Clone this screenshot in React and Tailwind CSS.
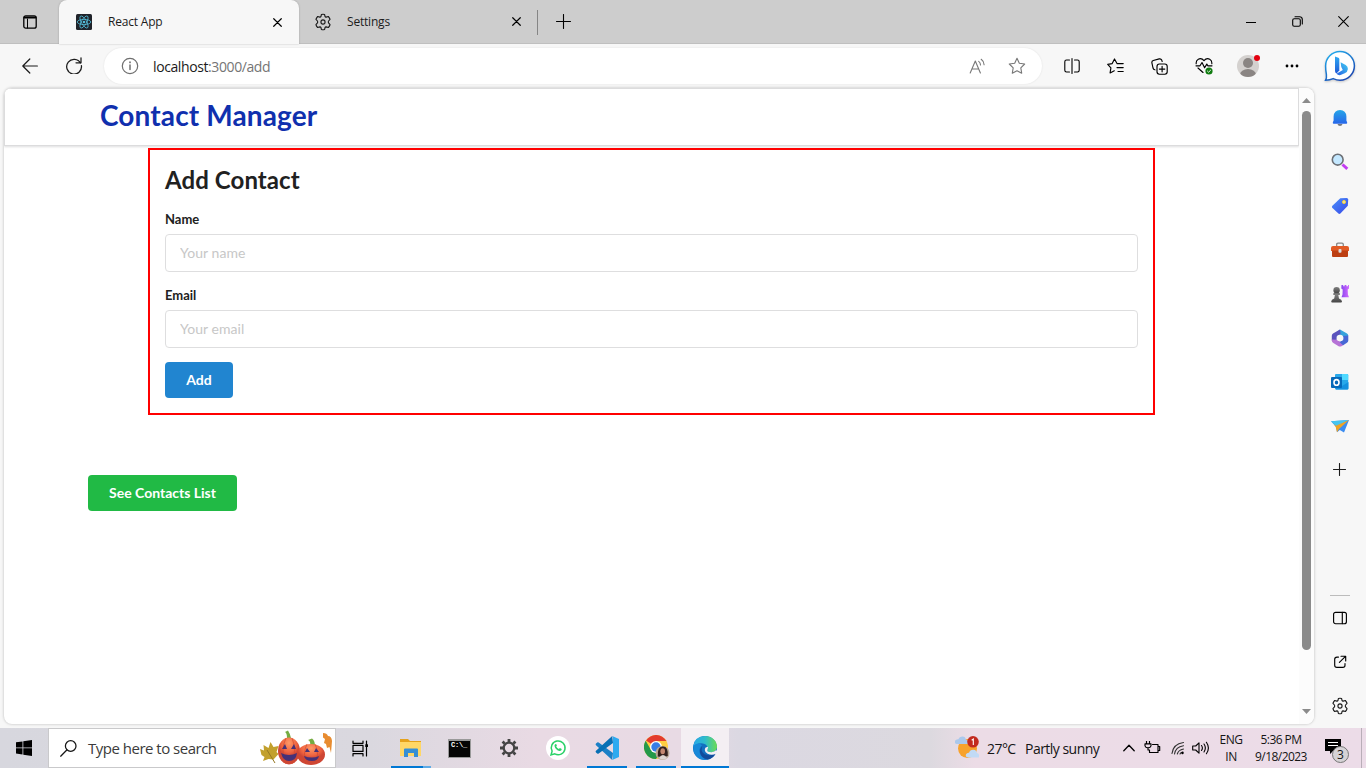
import React from "react";

function Svg({ w = 20, h, vb, sw = 1.2, color = "#1b1b1b", children, className = "" }) {
  const hh = h || w;
  return (
    <svg width={w} height={hh} viewBox={vb || `0 0 ${w} ${hh}`} fill="none" stroke={color} strokeWidth={sw}
      strokeLinecap="round" strokeLinejoin="round" className={"block shrink-0 " + className}>
      {children}
    </svg>
  );
}

const Close = ({ s = 9 }) => (
  <Svg w={s} vb="0 0 10 10" sw={1.3} color="#000"><path d="M.8 .8l8.4 8.4M9.2 .8L.8 9.2" /></Svg>
);

const Gear = ({ w = 18 }) => (
  <Svg w={w} vb="0 0 20 20" sw={1.25}>
    <path d="M8.2 1.7 Q10 1.2 11.8 1.7 L12.3 3.9 Q12.6 4.7 13.5 4.6 L15.9 3.9 Q17.2 5.2 17.8 7 L16.2 8.9 Q15.5 9.9 16.2 11 L17.8 13 Q17.2 14.8 15.9 16.1 L13.5 15.4 Q12.6 15.3 12.3 16.1 L11.8 18.3 Q10 18.8 8.2 18.3 L7.7 16.1 Q7.4 15.3 6.5 15.4 L4.1 16.1 Q2.8 14.8 2.2 13 L3.8 11 Q4.5 9.9 3.8 8.9 L2.2 7 Q2.8 5.2 4.1 3.9 L6.5 4.6 Q7.4 4.7 7.7 3.9 Z" />
    <circle cx="10" cy="10" r="2.3" />
  </Svg>
);

const ReactLogo = () => (
  <svg width="16" height="16" viewBox="0 0 16 16" className="block shrink-0">
    <rect width="16" height="16" rx="1.5" fill="#20232a" />
    <g fill="none" stroke="#53bcd8" strokeWidth=".8">
      <ellipse cx="8" cy="8" rx="6.8" ry="2.6" />
      <ellipse cx="8" cy="8" rx="6.8" ry="2.6" transform="rotate(60 8 8)" />
      <ellipse cx="8" cy="8" rx="6.8" ry="2.6" transform="rotate(120 8 8)" />
    </g>
    <circle cx="8" cy="8" r="1.3" fill="#53bcd8" />
  </svg>
);

const Star = ({ color }) => (
  <Svg w={18} color={color} sw={1.1}>
    <path d="M9 1.3l2.3 4.9 5.4.8-3.9 3.8.9 5.4L9 13.7l-4.7 2.5.9-5.4L1.3 7l5.4-.8z" />
  </Svg>
);

function TabStrip() {
  return (
    <div className="flex h-11 shrink-0 items-stretch border-b border-[#bfbfbf] bg-[#cdcdcd]">
      <div className="flex w-[59px] items-center justify-center">
        <Svg w={14} sw={1.3} color="#000">
          <rect x=".8" y=".8" width="12.4" height="12.4" rx="2" />
          <path d="M1.5 2.5h11" strokeWidth="2" /><path d="M4.5 4v9" strokeWidth="1" />
        </Svg>
      </div>
      <div className="-mb-px flex w-60 items-center rounded-t-lg bg-[#f7f7f7] pr-[17px] pl-[17px] shadow-[0_0_2px_rgba(0,0,0,.25)]">
        <ReactLogo />
        <span className="ml-4 flex-1 text-[12px] tracking-[-0.2px] text-[#1b1b1b]">React App</span>
        <Close />
      </div>
      <div className="flex w-[238px] items-center pr-4 pl-[15px]">
        <Gear />
        <span className="ml-[15px] flex-1 text-[12px] tracking-[-0.2px] text-[#1b1b1b]">Settings</span>
        <Close />
      </div>
      <div className="mt-[10px] h-[25px] w-px bg-[#858585]" />
      <div className="flex w-[51px] items-center justify-center">
        <Svg w={15} sw={1.1} color="#000"><path d="M7.5 .5v14M.5 7.5h14" /></Svg>
      </div>
      <div className="ml-auto flex">
        <div className="flex w-[46px] items-center justify-center"><Svg w={10} sw={1} color="#000"><path d="M0 5.5h10" /></Svg></div>
        <div className="flex w-[46px] items-center justify-center">
          <Svg w={11} sw={1.1} color="#000"><rect x=".7" y="2.7" width="7.6" height="7.6" rx="1.5" /><path d="M3 .7h4.6a2.7 2.7 0 0 1 2.7 2.7V8" /></Svg>
        </div>
        <div className="flex w-[46px] items-center justify-center"><Svg w={11} sw={1.1} color="#000"><path d="M.7.7l9.6 9.6M10.3.7L.7 10.3" /></Svg></div>
      </div>
    </div>
  );
}

const Slot = ({ children }) => <div className="flex w-11 shrink-0 items-center justify-center">{children}</div>;

function Bing() {
  return (
    <svg width="32" height="32" viewBox="0 0 32 32" className="block drop-shadow-[0_1px_1px_rgba(0,0,0,.2)]">
      <defs>
        <linearGradient id="ring" x1="0" y1="0" x2=".6" y2="1"><stop stopColor="#23b5f2" /><stop offset="1" stopColor="#1b4ab4" /></linearGradient>
        <linearGradient id="stem" x1="0" y1="0" x2="0" y2="1"><stop stopColor="#2fa9f2" /><stop offset="1" stopColor="#1f58d6" /></linearGradient>
        <linearGradient id="bee" x1="1" y1="0" x2="0" y2="1"><stop stopColor="#45d0f2" /><stop offset="1" stopColor="#2460e4" /></linearGradient>
      </defs>
      <path d="M1.6 30.2q1.2-2.4.8-5.6Q1.600 20.500 1.600 16A14.4 14.4 0 1 1 16 30.3c-3 0-5.1-.9-6.8-1.7-2 .9-4.2 1.5-7.6 1.6z" fill="#fff" stroke="url(#ring)" strokeWidth="1.5" />
      <path d="M11 6.6l3.4 1.2q.9.4.9 1.4v11.2l-2.8 3.2q-1.5-.8-1.5-2.5z" fill="url(#stem)" />
      <path d="M16.6 12.2l5.1 2.8q2.3 1.4 2.2 4-.2 3-3.2 4.3l-4.2 1.8q-2.3.5-4-1.3l6.3-3.7-1.5-3.2z" fill="url(#bee)" />
    </svg>
  );
}

function Toolbar() {
  return (
    <div className="flex h-11 shrink-0 items-center pl-2">
      <Slot><Svg w={16} sw={1.2}><path d="M.8 8h14.6M7.8 1L.8 8l7 7" /></Svg></Slot>
      <Slot><Svg w={18} sw={1.25} className="-translate-y-px"><path d="M15.6 7.2A7.4 7.4 0 1 0 16.4 9.6M16 1.8v5h-5" /></Svg></Slot>
      <div className="ml-2 flex h-9 w-[938px] items-center rounded-full bg-white pr-4 pl-[17px] shadow-[0_0_2px_rgba(0,0,0,.1)]">
        <Svg w={18} color="#6f6f6f" sw={1.2}><circle cx="9" cy="9" r="7.7" /><path d="M9 8v4.6" strokeWidth="1.5" /><path d="M9 5.2v.3" strokeWidth="1.7" /></Svg>
        <span className="ml-[14px] flex-1 text-[14px] tracking-[-0.4px] text-[#1b1b1b]">localhost<span className="text-[#757575]">:3000/add</span></span>
        <Svg w={17} color="#777" sw={1.1} className="mr-[22px]"><path d="M1.2 15L6.3 3l5.1 12M3 11h6.6M9.7 3.4q1.7 1.2 1.8 3.6M12.2 1.3q2.8 2 2.9 5.5" /></Svg>
        <Star color="#777" />
      </div>
      <div className="ml-2 flex">
        <Slot><Svg w={16} color="#000" sw={1.1} className="-ml-px"><path d="M5.5 2H2.5Q.8 2 .8 3.7v8.600Q.8 14 2.5 14h3M10.500 2h3q1.700 0 1.700 1.700v8.600q0 1.700-1.700 1.700h-3M8 .6v14.800" /></Svg></Slot>
        <Slot><Svg w={17} color="#000" sw={1.15} className="-ml-px"><path d="M10 5.6L7.5.9 5.2 5.6.7 6.4l3.2 3.5-.8 5 4.2-2.1M10 5.6h6.2M10 9.6h6.2M11 13.5h5.2" /></Svg></Slot>
        <Slot><Svg w={17} color="#000" sw={1.15} className="-ml-px"><rect x="6" y="6" width="10.2" height="10.2" rx="2.4" /><path d="M11.1 8.4v5.4M8.4 11.1h5.4M3.9 11.8q-1.5-.2-1.9-1.8L.9 4.8Q.6 3 2.3 2.5l5.9-1.6q1.8-.4 2.5 1.2l.5 1.4" /></Svg></Slot>
        <Slot><Svg w={18} color="#000" sw={1.15}>
          <path d="M1.2 6.8Q.8 3.5 3.3 2.2 6.5.7 9 3.7q2.5-3 5.7-1.5 2.5 1.3 2.1 4.6M1 8.8h4l2-3.3 2.6 5.3 2.2-3.7 1 1.7H17M3 11l5 4.5" />
          <circle cx="14" cy="14" r="3.6" fill="#107c10" stroke="none" /><path d="M12.4 14l1.2 1.2 2-2" stroke="#fff" strokeWidth=".9" />
        </Svg></Slot>
        <Slot>
          <svg width="26" height="24" viewBox="0 0 26 24" className="ml-1 block shrink-0">
            <defs><clipPath id="av"><circle cx="11" cy="12" r="11" /></clipPath></defs>
            <g clipPath="url(#av)"><rect width="22" height="24" fill="#d4d1cf" /><circle cx="11" cy="9" r="5" fill="#8a8583" /><ellipse cx="11" cy="20.7" rx="8" ry="5.7" fill="#8a8583" /></g>
            <circle cx="20" cy="4" r="3" fill="#e3000f" />
          </svg>
        </Slot>
        <Slot><Svg w={14} h={4}><g fill="#000" stroke="none"><circle cx="2" cy="2" r="1.4" /><circle cx="7" cy="2" r="1.4" /><circle cx="12" cy="2" r="1.4" /></g></Svg></Slot>
      </div>
      <div className="ml-[10px]"><Bing /></div>
    </div>
  );
}

function Field({ label, hint }) {
  return (
    <label className="mb-[14px] block">
      <span className="mb-1.5 block text-[13px] leading-[18px] font-bold text-[#212121]">{label}</span>
      <input placeholder={hint} className="block h-[38px] w-full rounded border border-[#dededf] bg-white px-[14px] pb-0.5 text-[14px] tracking-[0.05px] text-[#212121] placeholder:text-[#c7c7c7]" />
    </label>
  );
}

function Page() {
  return (
    <main className="flex min-w-0 flex-1 overflow-hidden rounded-lg bg-white shadow-[0_0_3px_rgba(0,0,0,.25)]">
      <div className="flex-1 font-['Lato',sans-serif]">
        <header className="h-[58px] border border-[#dcdcdd] pt-[6px] pl-[95px] shadow-[0_1px_2px_rgba(34,36,38,.15)]">
          <h1 className="text-[28px] leading-[40px] font-bold tracking-[0.12px] text-[#1030ae]">Contact Manager</h1>
        </header>
        <section className="mt-0.5 ml-36 h-[267px] w-[1007px] border-2 border-[#ff0000] px-[15px] pt-[14px]">
          <h2 className="mb-[14px] text-[24px] leading-[32px] font-bold tracking-[0.08px] text-[#212121]">Add Contact</h2>
          <Field label="Name" hint="Your name" />
          <Field label="Email" hint="Your email" />
          <button className="block h-9 w-[68px] rounded bg-[#2185d0] pb-0.5 text-[14px] font-bold text-white">Add</button>
        </section>
        <button className="mt-[60px] ml-[84px] block h-9 w-[149px] rounded bg-[#21ba45] pb-0.5 text-[14px] font-bold text-white">See Contacts List</button>
      </div>
      <div className="flex w-[15px] flex-col items-center bg-[#fcfcfc] pt-[10px] pb-[10px]">
        <Svg w={9} h={5}><path d="M0 5L4.5 0 9 5z" fill="#8b8b8b" stroke="none" /></Svg>
        <div className="mt-2 h-[539px] w-[9px] rounded-full bg-[#8b8b8b]" />
        <Svg w={9} h={5} className="mt-auto"><path d="M0 0L4.5 5 9 0z" fill="#8b8b8b" stroke="none" /></Svg>
      </div>
    </main>
  );
}

const sideIcons = [
  <g key="bell"><path d="M6.5 15h5q-.4 2-2.5 2t-2.5-2z" fill="#747980" /><path d="M2.6 11.5V7.5Q3 1 9 1t6.4 6.5v4l.8 2q.2 1.2-1 1.2H2.8q-1.2 0-1-1.2z" fill="url(#blueg)" /></g>,
  <g key="search"><path d="M11.5 11.5l4.8 4.3" stroke="#c23cf2" strokeWidth="3" /><circle cx="6.7" cy="6.7" r="5.4" fill="#c4e8ff" stroke="#6c7076" strokeWidth="1.6" /></g>,
  <g key="tag"><path d="M9.3 1.2l6.3-.2q1.6 0 1.6 1.5l-.4 6.3-7.4 7.7q-1 .8-2 0L1.2 10.8q-.7-1 .2-2z" fill="url(#tagg)" /><circle cx="13" cy="5" r="1.6" fill="#e8e4a0" stroke="#f4ca3a" strokeWidth="1" /></g>,
  <g key="box"><path d="M5.7 5V3.4q0-1.3 1.3-1.3h4q1.3 0 1.3 1.3V5" fill="none" stroke="#858585" strokeWidth="1.3" /><path d="M2 5h14q2 0 2 2v3H0V7q0-2 2-2z" fill="#e25b25" /><path d="M1 9.5h16v5.5q0 1-1 1H2q-1 0-1-1z" fill="#bd3f12" /><rect x="7.5" y="8" width="3" height="3.8" rx="1" fill="#ddd" /></g>,
  <g key="chess"><path d="M10.5 0h1.7v1.3h1.4V0h1.8v1.3H17V0h1v3.5l-1.3 1 .2 5.1 1.1 2.6h-7.5l1-2.6.2-5.1-1.4-1z" fill="url(#rookg)" /><g fill="url(#pawng)"><circle cx="5.600" cy="5.200" r="3.200" /><rect x="2.200" y="8" width="6.800" height="1.800" rx=".9" /><path d="M4 9.500h3.200l.8 4q2.900.8 3 3 0 1-1 1H1.200q-1 0-1-1 .1-2.200 3-3z" /></g></g>,
  <g key="m365"><path d="M9 .4l7 4q1.300.8 1.300 2.300L12 8.500 9 6.300 5.800 8.500 5.600 3z" fill="#35a3dc" /><path d="M9 .4L2 4.400Q.8 5.200.8 6.700v4.800l5-.7V7.300L9.600 5z" fill="#5a52bd" /><path d="M.8 10.500v1Q.8 13 2 13.700l5.600 3.500q1.400.7 2.800 0l3-1.800L9 12.600 5.800 10.800z" fill="#b673d6" /><path d="M17.300 6.500V11.500q0 1.500-1.300 2.300l-4 2.400L8.500 12.900l3.700-2.100V7z" fill="#4768d5" /><circle cx="9" cy="9" r="3.300" fill="#f7f7f7" /></g>,
  <g key="outlook"><rect x="4" y="1" width="13.2" height="15.5" rx="1" fill="#28a8ea" /><path d="M11 1h5q1.2 0 1.2 1.2V7H11z" fill="#50d9ff" /><path d="M4 10l7 3 6.5-4v6.5q0 1-1 1H5z" fill="#1490df" /><rect x="0" y="4" width="11" height="11" rx="1" fill="#0669b9" /><ellipse cx="5.5" cy="9.4" rx="2.5" ry="2.8" fill="none" stroke="#fff" strokeWidth="1.6" /></g>,
  <g key="send"><path d="M0 4.3L18 3 13 15.5l-4.2-2.4L6 15.3l-1-5.5z" fill="#3b8cf0" /><path d="M0 4.3l5.2 5L18 3z" fill="#47c5ef" /><path d="M2.8 7.2L5 8.800 18 3 8 12l-2 3.300-1.200-5z" fill="#efa324" /></g>,
];

function Sidebar() {
  return (
    <aside className="flex w-[52px] shrink-0 flex-col items-center pt-2">
      {sideIcons.map((icon, i) => (
        <div key={i} className="flex h-11 items-center justify-center">
          <svg width="18" height="18" viewBox="0 0 18 18" className="block">
            <defs>
              <linearGradient id="blueg" x2="0" y2="1"><stop stopColor="#26a6e8" /><stop offset="1" stopColor="#2766e9" /></linearGradient>
              <linearGradient id="tagg" x2="1" y2="1"><stop stopColor="#4b91fb" /><stop offset="1" stopColor="#3848e7" /></linearGradient>
              <linearGradient id="rookg" x2="1"><stop stopColor="#8646ed" /><stop offset="1" stopColor="#d46bff" /></linearGradient>
              <linearGradient id="pawng" x2="0" y2="1"><stop stopColor="#808080" /><stop offset="1" stopColor="#444" /></linearGradient>
            </defs>
            {icon}
          </svg>
        </div>
      ))}
      <div className="flex h-11 items-center"><Svg w={13} h={13} sw={1.1} className="mr-px mb-px"><path d="M6.5 .5v12M.5 6.5h12" /></Svg></div>
      <div className="mt-auto h-px w-5 bg-[#bcbcbc]" />
      <div className="flex h-11 items-center"><Svg w={14} color="#000" sw={1.15}><rect x=".6" y="1.3" width="12.8" height="11.4" rx="2" /><path d="M9.3 1.4v11.2" /></Svg></div>
      <div className="flex h-11 items-center"><Svg w={14} color="#000" sw={1.15}><path d="M5.5 2.1H4Q1.7 2.1 1.7 4.3v5.9q0 2.2 2.2 2.2h5.9q2.2 0 2.2-2.2V8.5M8 1.2h4.7V6M12.5 1.4L6.4 7.4" /></Svg></div>
      <div className="flex h-11 items-center"><Gear /></div>
    </aside>
  );
}

const Pumpkins = () => (
  <svg width="76" height="36" viewBox="0 0 76 36" className="block shrink-0">
    <defs><radialGradient id="pump" cx=".5" cy=".2"><stop stopColor="#ff9a68" /><stop offset=".7" stopColor="#ee6340" /><stop offset="1" stopColor="#ce4634" /></radialGradient></defs>
    <path d="M1 19l4 1.5L4.5 15l5 3 2-6 3 5 5-1-2 6 2 2-5 5.5-5-.5-5.5 2 1.5-4-3-2z" fill="#c2a02d" /><path d="M8 20l8 13" stroke="#967824" />
    <path d="M28 8q0-5-2-6l3-1.5q2 3 3 7.5z" fill="#75ac42" />
    <ellipse cx="30" cy="21" rx="11" ry="13.5" fill="url(#pump)" />
    <path d="M27 8q-6 12 0 26M33 8q5 12 0 26" fill="none" stroke="#d4492d" strokeWidth=".7" />
    <path d="M23 19l3-5 2 5zM32 19l3-5 2 5zM22 23q8 4 16 0-1 8-8 8-6 0-8-8z" fill="#453177" />
    <path d="M51 16q1-5-2-6l4-1.5q3 2 3 7.5z" fill="#75ac42" />
    <ellipse cx="52" cy="24.5" rx="14" ry="10.5" fill="url(#pump)" />
    <path d="M48 14q-5 10 0 20M56 14q5 10 0 20" fill="none" stroke="#d4492d" strokeWidth=".7" />
    <path d="M46 22l2-4 3 4zM55 22l2-4 3 4zM45 26q8 3 15 0-1 5-7 5-7 0-8-5z" fill="#453177" />
    <path d="M64 3q4 0 5 3 3.5 0 4 5l-1 12-1.5-6-2.5 1-1-4-2-1 1-4-2-1.5z" fill="#e88c30" />
  </svg>
);

const TaskApp = ({ children, line, active }) => (
  <div className={"flex h-10 shrink-0 flex-col items-center " + (active ? "ml-px w-12 bg-[#f4eff3]" : "w-[49px]")}>
    <div className="flex flex-1 items-center pt-0.5">{children}</div>
    <div className={"h-0.5 " + (active ? "w-full bg-[#0078d4]" : line === "split" ? "w-10 border-r-8 border-[#5fabe6] bg-[#0078d4]" : line ? "w-10 bg-[#0078d4]" : "w-10")} />
  </div>
);

function Taskbar() {
  return (
    <footer className="flex h-10 shrink-0 items-center bg-[linear-gradient(90deg,#d7d7de_0px,#dad8df_370px,#e9dae4_540px,#e8dae4_680px,#dbd8e2_740px,#dcd9df_930px,#ecdce6_975px,#ecdce8_1366px)] text-[#151515]">
      <div className="flex w-12 justify-center"><svg width="16" height="16" viewBox="0 0 16 16" className="block"><path d="M0 2.3l6.5-.9v6.1H0zM7.3 1.3L16 0v7.5H7.3zM0 8.3h6.5v6.2L0 13.6zM7.3 8.3H16V16l-8.7-1.2z" fill="#000" /></svg></div>
      <div className="flex h-10 w-[288px] items-center border border-[#c9c9cb] bg-white pl-[11px]">
        <Svg w={17} color="#151515" sw={1.25}><circle cx="10.7" cy="6" r="5.3" /><path d="M6.8 10L.7 16.2" /></Svg>
        <span className="ml-[11px] flex-1 text-[15px] tracking-[-0.5px] text-[#3b3b3b]">Type here to search</span>
        <Pumpkins />
      </div>
      <TaskApp><Svg w={17} color="#000" sw={1.2}><path d="M1 1v2.3h10V1M1 16v-2.3h10V16M1 5.4h10v6H1zM14.5 1v15" /><rect x="13.3" y="4.3" width="2.7" height="2.7" fill="#000" stroke="none" /></Svg></TaskApp>
      <div className="ml-px flex">
        <TaskApp line="split"><svg width="22" height="20" viewBox="0 0 22 20" className="block"><path d="M0 1h8l2 2h11v15H0z" fill="#e5a21b" /><path d="M0 4h21v14H0z" fill="#ffd766" /><path d="M4 11.5q0-1 1-1h12q1 0 1 1V19h-4v-4H8v4H4z" fill="#368fd5" /></svg></TaskApp>
        <TaskApp>
          <div className="h-[19px] w-[23px] border border-t-2 border-[#999] bg-[#050505] pl-0.5 font-['Liberation_Mono',monospace] text-[7px] leading-[9px] font-bold tracking-[-0.2px] text-white">C:\_</div>
        </TaskApp>
        <TaskApp><svg width="18" height="18" viewBox="0 0 18 18" className="block"><circle cx="9" cy="9" r="5.3" fill="none" stroke="#444" strokeWidth="2.3" /><g stroke="#444" strokeWidth="2.8"><path d="M9 0v3M9 15v3M0 9h3M15 9h3M2.6 2.6l2.1 2.1M13.3 13.3l2.1 2.1M2.6 15.4l2.1-2.1M13.3 4.7l2.1-2.1" /></g></svg></TaskApp>
        <TaskApp><svg width="24" height="24" viewBox="0 0 24 24" className="block"><circle cx="12" cy="12" r="12" fill="#fff" /><path d="M5 19l1.1-3.8a6.9 6.9 0 1 1 2.7 2.7z" fill="none" stroke="#2bd169" strokeWidth="1.5" /><path d="M9.2 8.2q.8-.7 1.3.4l.4 1-.7 1q.9 1.7 2.7 2.5l1-1 1.9 1q-.2 2-2.1 1.9-4.2-.8-5.2-5-.1-1.1.7-1.8z" fill="#2bd169" /></svg></TaskApp>
        <TaskApp line><svg width="24" height="24" viewBox="0 0 24 24" className="block"><path d="M17.2 24L1 9.2q-.9-.8 0-1.6l1.2-1.1q.7-.6 1.5 0L18 17z" fill="#1b80c7" /><path d="M17.2 0L1 14.8q-.9.8 0 1.6l1.2 1.1q.7.6 1.5 0L18 7z" fill="#0870b5" /><path d="M17.2 0L24 3v18l-6.8 3 .8-1.5v-21z" fill="#2daaf0" /></svg></TaskApp>
        <TaskApp line>
          <svg width="26" height="26" viewBox="0 0 26 26" className="ml-0.5 block"><circle cx="12" cy="12" r="12" fill="#ffcd42" /><path d="M12 12L2 5.5A12 12 0 0 1 22.5 6H12z" fill="#e33b2e" /><path d="M1.7 5.8A12 12 0 0 0 12 24l5-8-5-4-5 3z" fill="#24994a" /><circle cx="12" cy="12" r="6" fill="#fff" /><circle cx="12" cy="12" r="4.7" fill="#387ee5" /><circle cx="18.5" cy="18" r="7" fill="#b9a796" /><path d="M13.8 21.5q-.5-10.5 5-10 5.500-.5 5 9.500l-4 1z" fill="#34211d" /><ellipse cx="18.7" cy="16.2" rx="2.3" ry="3" fill="#c48770" /><path d="M15 23q4-6 8 0-4 3-8 0z" fill="#ded5d0" /></svg>
        </TaskApp>
        <TaskApp active>
          <svg width="24" height="24" viewBox="0 0 24 24" className="block"><defs><linearGradient id="edge" x2="1"><stop stopColor="#28a7e8" /><stop offset=".5" stopColor="#2fbccb" /><stop offset="1" stopColor="#6bdc52" /></linearGradient></defs><circle cx="12" cy="12" r="12" fill="#126fc0" /><path d="M0 11Q1.7 0 12 0c7 0 12 5 12 10.4 0 3.8-3 5.8-6.4 5.8-2.3 0-3.8-.8-3.2-2Q15.2 12 14 10q-1.7-2.8-6-2.8-5 0-8 3.8z" fill="url(#edge)" /><path d="M9 9.2q-4.2 3-2 8.4 2 4.6 7 6.1Q4 25 .7 15.8-.2 12 .8 9.7 5 5.8 9 9.2z" fill="#1889d8" /><path d="M9.2 10q-2.5 8 5.8 9.3 4 .4 7.6-1.8-2.6 5-8 6.1Q7.7 22 7 16.3q-.2-4 2.2-6.3z" fill="#134b9b" /><path d="M14.4 14q-.7 2.2 4 2.2 3.3-.3 4.5-2l1.5.6-1.3 3q-4.5 2-8.5 0-4.3-2.4-2-6.3l2.6-.8z" fill="#f4eff3" /></svg>
        </TaskApp>
      </div>
      <div className="ml-auto flex items-center">
        <svg width="25" height="24" viewBox="0 0 25 24" className="-ml-px block"><circle cx="12.5" cy="12.5" r="9.5" fill="#f7a22c" /><path d="M2 8q-3-.5-2-3.2Q1 3 3.3 3.2 4.5.3 7.4.5q3.2.2 3.4 3Q14 4 13 8z" fill="#aac8ec" /><path d="M13 21.5q-3-.5-2-3.2 1-1.8 3-1.6 1-3.2 4.4-3t3.4 3.3q3.2.5 2 4.5z" fill="#c1daf5" /><circle cx="18" cy="5.8" r="5.8" fill="#c22b20" /><path d="M16.7 4.2l1.6-1.2v6" fill="none" stroke="#fff" strokeWidth="1.1" /></svg>
        <span className="ml-[7px] w-[38px] text-[14px] tracking-[-0.55px] whitespace-nowrap">27°C</span>
        <span className="w-[75px] text-[14px] tracking-[-0.52px] whitespace-nowrap">Partly sunny</span>
        <Svg w={12} h={8} color="#000" sw={1.3} className="ml-[23px]"><path d="M.8 6.8L6 1.3l5.2 5.5" /></Svg>
        <Svg w={17} h={14} color="#000" sw={1.15} className="ml-[9px]"><path d="M8.500 3.5H14v8H5.500V9M14.500 5.5h1.200v4h-1.200M2.500 0v2.500M5.500 0v2.500M1 2.800h6v2q-.5 2-3 2t-3-2zM4 7v2h1.500" /></Svg>
        <Svg w={14} h={14} color="#333" sw={1.1} className="ml-[10px]"><path d="M1 12.5Q2 3 12.5 1.5M3.5 13Q4.5 6 12.5 4.7M6.3 13q1-4 6.2-5" /><path d="M9 13q.5-1.5 3-2" /><circle cx="11.5" cy="12" r="1.2" fill="#000" stroke="none" /></Svg>
        <Svg w={18} h={14} color="#000" sw={1.1} className="ml-[7px]"><path d="M.7 5h3L7 1.8v10.4L3.7 9h-3zM9.5 4.5q1.8 2.5 0 5M12 3q2.7 4 0 8M14.4 1.3q4 5.7 0 11.4" /></Svg>
        <div className="ml-2 w-[26px] text-center text-[12px] leading-[17px] tracking-[-0.5px]">ENG<br />IN</div>
        <div className="ml-[9px] w-[56px] text-center text-[12px] leading-[17px] tracking-[-0.55px] whitespace-nowrap">5:36 PM<br />9/18/2023</div>
        <div className="relative ml-[16px] h-[26px] w-[25px]">
          <svg width="17" height="17" viewBox="0 0 17 17" className="mt-0.5 block"><path d="M0 2h16v12h-8l-3 3v-3H0z" fill="#000" /><path d="M3 5.5h10M3 8.5h10" stroke="#fff" /></svg>
          <div className="absolute top-[11px] left-[7px] flex size-[17px] items-center justify-center rounded-full border border-[#777] bg-[#d6d3d6] text-[12px]">3</div>
        </div>
        <div className="ml-[11px] h-10 w-px bg-[#b9aeb8]" /><div className="w-1" />
      </div>
    </footer>
  );
}

export default function App() {
  return (
    <div className="flex h-[768px] w-[1366px] flex-col overflow-hidden bg-[#f7f7f7] font-['Open_Sans','Noto_Sans',sans-serif]">
      <TabStrip />
      <Toolbar />
      <div className="flex h-[640px] shrink-0">
        <div className="flex flex-1 pb-1 pl-1"><Page /></div>
        <Sidebar />
      </div>
      <Taskbar />
    </div>
  );
}
